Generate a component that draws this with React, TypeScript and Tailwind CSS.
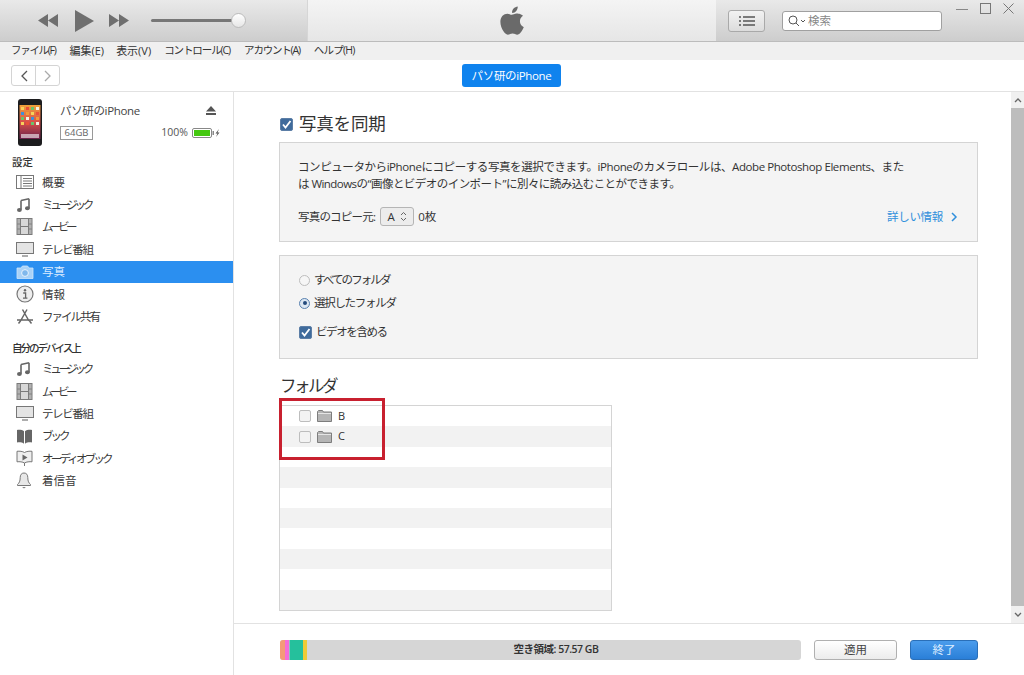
import { ReactNode } from "react";

const font = { fontFamily: '"Open Sans", "Noto Sans CJK JP", sans-serif' };

function FilmIcon() {
  return (
    <svg width="17" height="17" viewBox="0 0 17 17">
      <rect x="1" y="0.5" width="15" height="16" fill="#d8d8d8" stroke="#7a7a7a" />
      <path d="M4.5 1v15M12.5 1v15M1 6h3.500M1 11h3.500M12.500 6h3.500M12.500 11h3.500M4.500 8.500h8" stroke="#7a7a7a" fill="none" />
      <rect x="1" y="1" width="3.500" height="15" fill="#8a8a8a" opacity="0.5" />
      <rect x="12.500" y="1" width="3.500" height="15" fill="#8a8a8a" opacity="0.5" />
    </svg>
  );
}

function MusicIcon() {
  return (
    <svg width="16" height="16" viewBox="0 0 16 16">
      <path d="M5 3.500v9.200M13 1.800v9.200M5 3.500L13 1.800" stroke="#666" strokeWidth="1.600" fill="none" />
      <ellipse cx="3.400" cy="13" rx="2.400" ry="2" fill="#666" />
      <ellipse cx="11.400" cy="11.300" rx="2.400" ry="2" fill="#666" />
    </svg>
  );
}

function TvIcon() {
  return (
    <svg width="18" height="15" viewBox="0 0 18 15">
      <rect x="0.500" y="0.500" width="17" height="11" fill="#e4e4e4" stroke="#777" />
      <path d="M6 14h6" stroke="#777" strokeWidth="1.200" />
    </svg>
  );
}

function SummaryIcon() {
  return (
    <svg width="18" height="14" viewBox="0 0 18 14">
      <rect x="0.500" y="0.500" width="17" height="13" fill="#fff" stroke="#777" />
      <path d="M5 1v12M7 3.500h9M7 6h9M7 8.500h9M7 11h9" stroke="#777" fill="none" />
    </svg>
  );
}

function CameraIcon() {
  return (
    <svg width="18" height="14" viewBox="0 0 18 14">
      <path d="M1 3h4l1.400-2h5.200L13 3h4v10.500H1z" fill="#a9d2f7" stroke="#cfe6fb" strokeWidth="0.800" />
      <circle cx="9" cy="8" r="3.400" fill="#7fb8ec" stroke="#e8f3fd" />
    </svg>
  );
}

function InfoIcon() {
  return (
    <svg width="18" height="18" viewBox="0 0 18 18">
      <circle cx="9" cy="9" r="8" fill="#eee" stroke="#777" strokeWidth="1.200" />
      <circle cx="9" cy="5.200" r="1.200" fill="#666" />
      <path d="M7.200 8h2.400v5M7 13.200h4.400" stroke="#666" strokeWidth="1.300" fill="none" />
    </svg>
  );
}

function ShareIcon() {
  return (
    <svg width="18" height="17" viewBox="0 0 18 17">
      <path d="M6.500 1.500L13 13M11 1.500L4.500 13M1 12h16M2.500 15.500l2-2.500M15.500 15.500l-2-2.500" stroke="#666" strokeWidth="1.500" fill="none" />
    </svg>
  );
}

function BookIcon() {
  return (
    <svg width="17" height="15" viewBox="0 0 17 15">
      <path d="M8 2.200C6.500 1 3.500.6 1 1v12.500c2.500-.4 5.500 0 7 1.200zM9 2.200C10.500 1 13.500.6 16 1v12.500c-2.500-.4-5.500 0-7 1.200z" fill="#666" />
    </svg>
  );
}

function AudiobookIcon() {
  return (
    <svg width="17" height="16" viewBox="0 0 17 16">
      <path d="M8.500 2.500C6.500 1.300 3.500 1 1 1.300v10.500c2.500-.3 5.500 0 7.500 1.200 2-1.200 5-1.500 7.500-1.200V1.300c-2.500-.3-5.500 0-7.500 1.200z" fill="#eee" stroke="#777" />
      <path d="M6.500 4.500l5 3-5 3z" fill="#666" />
      <path d="M8.500 13v3" stroke="#777" />
    </svg>
  );
}

function BellIcon() {
  return (
    <svg width="16" height="17" viewBox="0 0 16 17">
      <path d="M8 1C5.400 1 4.200 3 4.200 5.600c0 3.600-1 5.400-2.700 6.900v1h13v-1c-1.700-1.500-2.700-3.300-2.700-6.900C11.800 3 10.600 1 8 1z" fill="#e8e8e8" stroke="#777" />
      <path d="M6.500 15c.3 1 2.700 1 3 0" stroke="#777" fill="none" />
    </svg>
  );
}

function PhoneIcon() {
  const cols = [3, 8, 13, 18];
  const rows = [8, 13, 18, 23];
  const colors = ["#f7d25a", "#e8503a", "#6ac46a", "#f5f0e0", "#3f8fd8", "#f29a3a"];
  return (
    <svg width="24" height="47" viewBox="0 0 24 47">
      <defs>
        <linearGradient id="phone" x1="0" y1="0" x2="0" y2="1">
          <stop offset="0" stopColor="#f0a23a" />
          <stop offset="0.5" stopColor="#d8504a" />
          <stop offset="1" stopColor="#6a1f4a" />
        </linearGradient>
      </defs>
      <rect width="24" height="47" rx="3" fill="#1c1c1e" />
      <rect x="1.500" y="6" width="21" height="34" fill="url(#phone)" />
      {rows.map((y, r) =>
        cols.map((x, c) => <rect key={`${r}-${c}`} x={x} y={y} width="3" height="3" fill={colors[(r * 4 + c) % 6]} />)
      )}
      <rect x="3" y="35" width="18" height="4" fill="#e8d8e0" opacity="0.7" />
    </svg>
  );
}

function NavRow({ icon, label, active, track }: { icon: ReactNode; label: string; active?: boolean; track?: string }) {
  return (
    <div className={`flex h-[22.4px] items-center pl-[16px] ${active ? "bg-[#2b8ff0] text-[#dcecff]" : "text-[#3a3a3a]"}`}>
      <div className="flex w-[26px] items-center justify-start">{icon}</div>
      <span className={`text-[11.5px] ${track ?? ""}`}>{label}</span>
    </div>
  );
}

function Checkbox({ checked }: { checked?: boolean }) {
  if (checked) {
    return (
      <svg width="13" height="13" viewBox="0 0 13 13">
        <rect x="0.500" y="0.500" width="12" height="12" rx="1.500" fill="#3f6b9c" stroke="#5c7ea6" />
        <path d="M3 6.500l2.500 3L10.500 3" stroke="#fff" strokeWidth="1.800" fill="none" />
      </svg>
    );
  }
  return <div className="h-[12px] w-[12px] rounded-[2px] border border-[#bdbdbd] bg-[#f3f3f3]" />;
}

function FolderIcon() {
  return (
    <svg width="15" height="12" viewBox="0 0 15 12">
      <path d="M.5 11.500V1.500L1.500.5h4l1 1.500h8v9.500z" fill="#b5b5b5" stroke="#7d7d7d" />
      <path d="M1 3.500h13" stroke="#e5e5e5" />
    </svg>
  );
}

const folderRows = ["B", "C", "", "", "", "", "", "", "", ""];

export default function App() {
  return (
    <div className="flex h-[675px] w-[1024px] flex-col overflow-hidden bg-white text-[#333]" style={font}>
      {/* toolbar */}
      <div className="flex h-[42px] shrink-0 border-b border-[#bcbcbc] bg-gradient-to-b from-[#e9e9e9] to-[#cdcdcd]">
        <div className="flex w-[308px] items-center border-r border-[#d6d6d6] pl-[38px]">
          <svg width="20" height="13" viewBox="0 0 20 13">
            <path d="M10 0v13L0 6.500zM20 0v13L10 6.500z" fill="#6f6f6f" />
          </svg>
          <svg className="ml-[17px]" width="19" height="22" viewBox="0 0 19 22">
            <path d="M0 0l19 11L0 22z" fill="#6f6f6f" />
          </svg>
          <svg className="ml-[15px]" width="20" height="13" viewBox="0 0 20 13">
            <path d="M0 0v13l10-6.500zM10 0v13l10-6.500z" fill="#6f6f6f" />
          </svg>
          <div className="relative ml-[22px] h-[3px] w-[88px] rounded-full bg-[#777]">
            <div className="absolute right-[-7px] top-[-6px] h-[15px] w-[15px] rounded-full border border-[#bbb] bg-gradient-to-b from-white to-[#e6e6e6]" />
          </div>
        </div>
        <div className="flex w-[408px] items-center justify-center bg-gradient-to-b from-[#f4f4f4] to-[#e6e6e6]">
          <svg width="24" height="29" viewBox="0 0 814 1000">
            <path
              d="M788 340c-6 4-107 61-107 187 0 146 128 198 132 199-1 3-20 71-68 140-42 61-87 122-155 122s-85-39-163-39c-76 0-103 40-165 40s-106-56-155-125C50 782 6 661 6 546c0-185 120-283 239-283 63 0 115 41 155 41 38 0 97-44 169-44 27 0 125 3 219 80zM554 169c30-35 51-84 51-133 0-7-1-14-2-19-49 2-107 33-142 73-27 31-53 80-53 130 0 7 1 15 2 17 3 1 8 1 13 1 44 0 99-30 131-69z"
              fill="#6a6a6a"
            />
          </svg>
        </div>
        <div className="relative flex flex-1 items-center pl-[12px]">
          <div className="flex h-[22px] w-[37px] items-center justify-center rounded-[3px] border border-[#a9a9a9] bg-gradient-to-b from-[#f2f2f2] to-[#dcdcdc]">
            <svg width="16" height="10" viewBox="0 0 16 10">
              <path d="M0 1h2M4 1h12M0 5h2M4 5h12M0 9h2M4 9h12" stroke="#555" strokeWidth="1.300" />
            </svg>
          </div>
          <div className="ml-[17px] flex h-[20px] w-[160px] items-center rounded-[3px] border border-[#a0a0a0] bg-white pl-[5px]">
            <svg width="18" height="12" viewBox="0 0 18 12">
              <circle cx="5" cy="5" r="4" fill="none" stroke="#555" />
              <path d="M8 8l3 3M13 5l2 2 2-2" stroke="#555" fill="none" />
            </svg>
            <span className="ml-[2px] text-[11.5px] text-[#888]">検索</span>
          </div>
          <div className="absolute right-[10px] top-[3px] flex items-center gap-[12px]">
            <svg width="12" height="11" viewBox="0 0 12 11">
              <path d="M0 6.500h12" stroke="#888" />
            </svg>
            <svg width="11" height="11" viewBox="0 0 11 11">
              <rect x="0.500" y="0.500" width="10" height="10" fill="none" stroke="#777" />
            </svg>
            <svg width="11" height="11" viewBox="0 0 11 11">
              <path d="M.5.500l10 10M10.500.500l-10 10" stroke="#777" />
            </svg>
          </div>
        </div>
      </div>

      {/* menu */}
      <div className="flex h-[18px] shrink-0 items-center bg-[#f0f0f0] pl-[11px] text-[10.5px] text-[#333]">
        <span className="tracking-[-1.3px]">ファイル(F)</span>
        <span className="ml-[14px] text-[11px]">編集(E)</span>
        <span className="ml-[12px] text-[11px]">表示(V)</span>
        <span className="ml-[13px] tracking-[-1.1px]">コントロール(C)</span>
        <span className="ml-[14px] tracking-[-1.2px]">アカウント(A)</span>
        <span className="ml-[14px] tracking-[-0.8px]">ヘルプ(H)</span>
      </div>

      {/* nav bar */}
      <div className="relative flex h-[32px] shrink-0 items-center border-b border-[#e2e2e2] pl-[11px]">
        <div className="flex h-[21px] w-[49px] rounded-[3px] border border-[#d4d4d4]">
          <div className="flex flex-1 items-center justify-center border-r border-[#d4d4d4]">
            <svg width="8" height="12" viewBox="0 0 8 12">
              <path d="M7 1L2 6l5 5" stroke="#555" strokeWidth="1.300" fill="none" />
            </svg>
          </div>
          <div className="flex flex-1 items-center justify-center">
            <svg width="8" height="12" viewBox="0 0 8 12">
              <path d="M1 1l5 5-5 5" stroke="#aaa" strokeWidth="1.300" fill="none" />
            </svg>
          </div>
        </div>
        <div className="absolute left-[462px] top-[4px] flex h-[23px] w-[99px] items-center justify-center rounded-[3px] bg-[#0f83ee] text-[11.5px] tracking-[-0.35px] text-white">
          パソ研のiPhone
        </div>
      </div>

      <div className="flex min-h-0 flex-1">
        {/* sidebar */}
        <div className="w-[234px] shrink-0 border-r border-[#e2e2e2]">
          <div className="flex h-[60px] pl-[18px] pt-[7px]">
            <PhoneIcon />
            <div className="ml-[18px] w-[100px] pt-[3px]">
              <div className="text-[11.5px] leading-[18px] tracking-[-0.35px] text-[#444]">パソ研のiPhone</div>
              <div className="mt-[6px] flex h-[14px] w-[33px] items-center justify-center border border-[#999] text-[9.5px] text-[#666]">64GB</div>
            </div>
            <div className="-ml-[2px] flex w-[62px] flex-col items-end">
              <svg className="mr-[4px] mt-[7px]" width="10" height="9" viewBox="0 0 10 9">
                <path d="M5 0l5 5.500H0zM0 7h10v2H0z" fill="#555" />
              </svg>
              <div className="mt-[10px] flex items-center text-[10.5px] text-[#555]">
                <span>100%</span>
                <svg className="ml-[4px]" width="28" height="10" viewBox="0 0 28 10">
                  <rect x="0.500" y="0.500" width="19" height="9" rx="1.500" fill="none" stroke="#888" />
                  <rect x="2" y="2" width="16" height="6" fill="#44c810" />
                  <rect x="20.500" y="3" width="1.500" height="4" fill="#888" />
                  <path d="M27 1l-3.500 4.500h2L24 9l3.500-4.500h-2z" fill="#555" />
                </svg>
              </div>
            </div>
          </div>
          <div className="pl-[12px] pt-[1px] text-[10.5px] leading-[18px] font-medium text-[#333]">設定</div>
          <div>
            <NavRow icon={<SummaryIcon />} label="概要" />
            <NavRow icon={<MusicIcon />} label="ミュージック" track="tracking-[-3.3px]" />
            <NavRow icon={<FilmIcon />} label="ムービー" track="tracking-[-3.5px]" />
            <NavRow icon={<TvIcon />} label="テレビ番組" track="tracking-[-1.4px]" />
            <NavRow icon={<CameraIcon />} label="写真" active />
            <NavRow icon={<InfoIcon />} label="情報" />
            <NavRow icon={<ShareIcon />} label="ファイル共有" track="tracking-[-2px]" />
          </div>
          <div className="pl-[12px] pt-[11px] text-[10.5px] leading-[18px] font-medium tracking-[-2px] text-[#333]">自分のデバイス上</div>
          <div className="mt-[1px]">
            <NavRow icon={<MusicIcon />} label="ミュージック" track="tracking-[-3.3px]" />
            <NavRow icon={<FilmIcon />} label="ムービー" track="tracking-[-3.5px]" />
            <NavRow icon={<TvIcon />} label="テレビ番組" track="tracking-[-1.4px]" />
            <NavRow icon={<BookIcon />} label="ブック" track="tracking-[-3px]" />
            <NavRow icon={<AudiobookIcon />} label="オーディオブック" track="tracking-[-2.8px]" />
            <NavRow icon={<BellIcon />} label="着信音" />
          </div>
        </div>

        {/* content */}
        <div className="flex min-w-0 flex-1 flex-col">
          <div className="flex min-h-0 flex-1 border-b border-[#e2e2e2]">
            <div className="relative flex-1 pl-[45px] pt-[20px]">
              <div className="flex h-[24px] items-center pl-[1px]">
                <Checkbox checked />
                <span className="ml-[6px] pb-[2px] text-[17.5px] tracking-[-0.2px] text-[#333]">写真を同期</span>
              </div>
              <div className="mt-[6px] h-[100px] w-[699px] border border-[#d4d4d4] bg-[#f4f4f4] pl-[18px] pt-[15px] text-[11.5px] text-[#333]">
                <div className="w-[640px] leading-[17px]">
                  <div className="tracking-[-0.42px]">コンピュータからiPhoneにコピーする写真を選択できます。iPhoneのカメラロールは、Adobe Photoshop Elements、また</div>
                  <div className="tracking-[-0.54px]">は Windowsの“画像とビデオのインポート”に別々に読み込むことができます。</div>
                </div>
                <div className="mt-[15px] flex items-center pr-[19px]">
                  <span className="tracking-[-0.8px]">写真のコピー元:</span>
                  <div className="ml-[5px] flex h-[19px] w-[34px] items-center justify-center gap-[5px] rounded-[3px] border border-[#b5b5b5] bg-[#ececec]">
                    <span>A</span>
                    <svg width="7" height="11" viewBox="0 0 7 11">
                      <path d="M1 4l2.500-2.500L6 4M1 7l2.500 2.500L6 7" stroke="#666" fill="none" />
                    </svg>
                  </div>
                  <span className="ml-[4px]">0枚</span>
                  <span className="ml-auto tracking-[-0.3px] text-[#2f8fdc]">詳しい情報</span>
                  <svg className="ml-[8px]" width="7" height="10" viewBox="0 0 7 10">
                    <path d="M1 1l4 4-4 4" stroke="#2f8fdc" strokeWidth="1.500" fill="none" />
                  </svg>
                </div>
              </div>
              <div className="mt-[13px] h-[104px] w-[699px] border border-[#d4d4d4] bg-[#f4f4f4] pl-[19px] pt-[14px] text-[11.5px] text-[#333]">
                <div className="flex h-[20px] items-center gap-[4px]">
                  <div className="h-[11px] w-[11px] rounded-full border border-[#bdbdbd] bg-[#f6f6f6]" />
                  <span className="tracking-[-1.9px]">すべてのフォルダ</span>
                </div>
                <div className="mt-[3px] flex h-[20px] items-center gap-[4px]">
                  <div className="flex h-[11px] w-[11px] items-center justify-center rounded-full border border-[#5a82b0] bg-[#dbe6f2]">
                    <div className="h-[4px] w-[4px] rounded-full bg-[#234a7c]" />
                  </div>
                  <span className="tracking-[-1.3px]">選択したフォルダ</span>
                </div>
                <div className="mt-[9px] flex h-[20px] items-center gap-[4px]">
                  <Checkbox checked />
                  <span className="tracking-[-1.4px]">ビデオを含める</span>
                </div>
              </div>
              <div className="mt-[15px] h-[24px] pl-[1px] text-[16.5px] leading-[24px] tracking-[-2.5px] text-[#333]">フォルダ</div>
              <div className="mt-[7px] w-[333px] border border-[#d4d4d4]">
                {folderRows.map((name, i) => (
                  <div key={i} className={`flex h-[20.4px] items-center pl-[19px] text-[11px] ${i % 2 ? "bg-[#f2f2f2]" : "bg-white"}`}>
                    {name && (
                      <>
                        <Checkbox />
                        <div className="ml-[6px]">
                          <FolderIcon />
                        </div>
                        <span className="ml-[6px]">{name}</span>
                      </>
                    )}
                  </div>
                ))}
              </div>
              {/* red annotation */}
              <div className="absolute left-[45px] top-[306px] h-[62px] w-[106px] border-[3px] border-[#c8202f]" />
            </div>
            {/* scrollbar */}
            <div className="flex w-[13px] shrink-0 flex-col bg-[#f0f0f0]">
              <div className="flex h-[16px] items-center justify-center">
                <svg width="8" height="5" viewBox="0 0 8 5">
                  <path d="M1 4l3-3 3 3" stroke="#666" strokeWidth="1.300" fill="none" />
                </svg>
              </div>
              <div className="flex-1 bg-[#bdbdbd]" />
              <div className="flex h-[17px] items-center justify-center">
                <svg width="8" height="5" viewBox="0 0 8 5">
                  <path d="M1 1l3 3 3-3" stroke="#666" strokeWidth="1.300" fill="none" />
                </svg>
              </div>
            </div>
          </div>

          {/* footer */}
          <div className="flex h-[51px] shrink-0 items-start pl-[46px] pt-[16px]">
            <div className="relative flex h-[20px] w-[521px] overflow-hidden rounded-[3px] bg-[#d6d6d6]">
              <div className="w-[5px] bg-[#f59a78]" />
              <div className="w-[4px] bg-[#f56bd8]" />
              <div className="w-[1px] bg-[#8fc7c0]" />
              <div className="w-[13px] bg-[#25c09c]" />
              <div className="w-[4px] bg-[#f0cb35]" />
              <div className="absolute inset-0 flex items-center justify-center pl-[31px] text-[10.5px] font-semibold tracking-[-0.5px] text-[#333]">
                空き領域: 57.57 GB
              </div>
            </div>
            <div className="ml-[13px] flex h-[20px] w-[83px] items-center justify-center rounded-[3px] border border-[#b0b0b0] bg-gradient-to-b from-white to-[#ececec] text-[11.5px] text-[#444]">
              適用
            </div>
            <div className="ml-[13px] flex h-[20px] w-[68px] items-center justify-center rounded-[3px] border border-[#2a6fb8] bg-gradient-to-b from-[#4a9cec] to-[#2a7fd8] text-[11.5px] text-[#dcecff]">
              終了
            </div>
          </div>
        </div>
      </div>
    </div>
  );
}
